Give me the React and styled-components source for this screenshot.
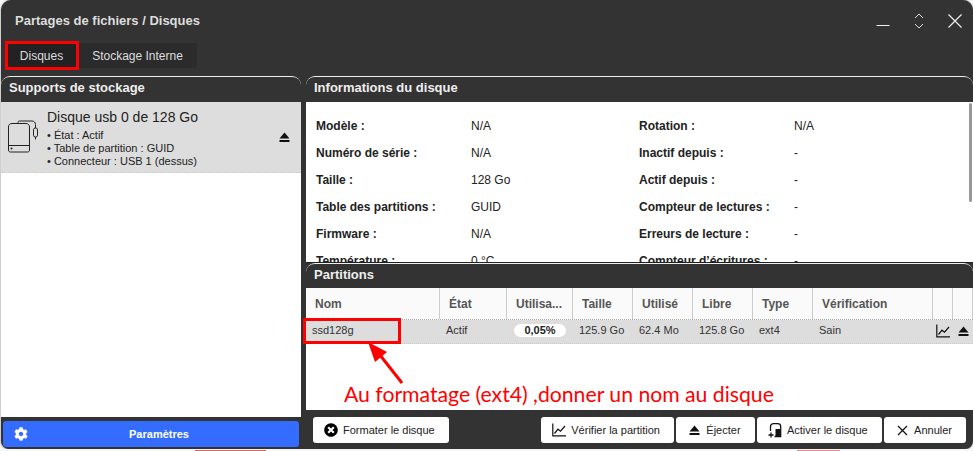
import React from "react";
import styled, { createGlobalStyle } from "styled-components";
import { FaCog, FaTimesCircle } from "react-icons/fa";

const GlobalStyle = createGlobalStyle`
  * {
    box-sizing: border-box;
  }
  html, body {
    margin: 0;
    padding: 0;
    overflow: hidden;
  }
  html {
    background:
      linear-gradient(#c96a5a, #c96a5a) 195px 450px / 71px 1px no-repeat,
      linear-gradient(#e58a8a, #e58a8a) 797px 450px / 43px 1px no-repeat,
      #f6f6f6;
  }
  body {
    font-family: "Liberation Sans", Arial, sans-serif;
  }
`;

const infoRows = [
  ["Modèle :", "N/A", "Rotation :", "N/A"],
  ["Numéro de série :", "N/A", "Inactif depuis :", "-"],
  ["Taille :", "128 Go", "Actif depuis :", "-"],
  ["Table des partitions :", "GUID", "Compteur de lectures :", "-"],
  ["Firmware :", "N/A", "Erreurs de lecture :", "-"],
  ["Température :", "0 °C", "Compteur d’écritures :", "-"],
];

const columns = ["Nom", "État", "Utilisa...", "Taille", "Utilisé", "Libre", "Type", "Vérification", "", ""];

const EjectIcon = ({ size = 11 }) => (
  <svg width={size} height={size} viewBox="0 0 11 11" fill="currentColor">
    <path d="M5.5 0.5 10.5 6.5H0.5Z" />
    <rect x="0.5" y="8" width="10" height="2" />
  </svg>
);

const ChartIcon = () => (
  <svg width="14" height="14" viewBox="0 0 14 14" fill="none" stroke="currentColor" strokeWidth="1.2">
    <path d="M0.8 0.5V12.9H14" />
    <path d="M2.5 10.5 6 6.2 8.5 8.2 13 3" />
  </svg>
);

const DiskIcon = () => (
  <svg width="34" height="34" viewBox="0 0 34 34" fill="none" stroke="#222" strokeWidth="1">
    <path d="M1.5 30V7C1.5 5 2.5 3.5 5 3.5H19C21 3.5 22.5 5 22.5 7V30C22.5 31.5 21.5 32 20.5 32H3.5C2.5 32 1.5 31.5 1.5 30Z" />
    <path d="M1.5 25.5H22.5" />
    <path d="M11 3.5V2.5C11 1.5 11.5 1 12.5 1H25C27 1 28.5 2.5 28.5 4.5V8" />
    <rect x="26.5" y="8" width="4" height="9" rx="1.8" />
    <path d="M28.5 17V19.5" />
    <circle cx="4.5" cy="28.5" r="1" fill="#222" stroke="none" />
  </svg>
);

const ActivateIcon = () => (
  <svg width="14" height="15" viewBox="0 0 14 15" fill="none" stroke="#111" strokeWidth="1.3">
    <path d="M2.5 8V3.5C2.5 1.8 3.8 0.7 5.5 0.7H9.5C11.5 0.7 12.7 1.8 12.7 3.5V13.5H6.5" />
    <rect x="7.5" y="6" width="4.8" height="7" fill="#111" stroke="none" />
    <path d="M0.5 12H5.5M3 9.5V14.5" />
  </svg>
);

const App = () => (
  <>
    <GlobalStyle />
    <Window>
      <TitleBar>
        <Title>Partages de fichiers / Disques</Title>
        <WindowControls>
          <svg width="14" height="14" viewBox="0 0 14 14" stroke="#eee" fill="none">
            <path d="M0.5 11.5H13.5" />
          </svg>
          <svg width="12" height="16" viewBox="0 0 12 16" stroke="#ddd" fill="none">
            <path d="M2 5 6 1 10 5M2 11 6 15 10 11" />
          </svg>
          <svg width="14" height="14" viewBox="0 0 14 14" stroke="#eee" strokeWidth="1.2" fill="none">
            <path d="M0.5 0.5 13.5 13.5M13.5 0.5 0.5 13.5" />
          </svg>
        </WindowControls>
      </TitleBar>

      <Tabs>
        <Tab $active>
          Disques
          <RedBox $inset="-2px -1px -2px -2px" />
        </Tab>
        <Tab>Stockage Interne</Tab>
      </Tabs>

      <Main>
        <LeftColumn>
          <PanelHead>Supports de stockage</PanelHead>
          <DiskList>
            <DiskItem>
              <DiskIcon />
              <DiskText>
                <DiskName>Disque usb 0 de 128 Go</DiskName>
                <DiskLine>• État : Actif</DiskLine>
                <DiskLine>• Table de partition : GUID</DiskLine>
                <DiskLine>• Connecteur : USB 1 (dessus)</DiskLine>
              </DiskText>
              <EjectSlot>
                <EjectIcon />
              </EjectSlot>
            </DiskItem>
          </DiskList>
          <SettingsBar>
            <SettingsButton>
              <FaCog size={14} />
              <span>Paramètres</span>
            </SettingsButton>
          </SettingsBar>
        </LeftColumn>

        <RightColumn>
          <PanelHead>Informations du disque</PanelHead>
          <InfoArea>
            <InfoGrid>
              {infoRows.flat().map((text, i) =>
                i % 2 === 0 ? <InfoLabel key={i}>{text}</InfoLabel> : <InfoValue key={i}>{text}</InfoValue>
              )}
            </InfoGrid>
            <ScrollThumb />
          </InfoArea>

          <PartitionSection>
            <PanelHead $compact>Partitions</PanelHead>
            <TableHead>
              {columns.map((c, i) => (
                <HeadCell key={i}>{c}</HeadCell>
              ))}
            </TableHead>
            <TableBody>
              <TableRow>
                <RowCell>
                  ssd128g
                  <RedBox $inset="-2px 39px -1px -3px" />
                </RowCell>
                <RowCell>Actif</RowCell>
                <RowCell>
                  <Pill>0,05%</Pill>
                </RowCell>
                <RowCell>125.9 Go</RowCell>
                <RowCell>62.4 Mo</RowCell>
                <RowCell>125.8 Go</RowCell>
                <RowCell>ext4</RowCell>
                <RowCell>Sain</RowCell>
                <IconCell>
                  <ChartIcon />
                </IconCell>
                <IconCell>
                  <EjectIcon />
                </IconCell>
              </TableRow>
              <Arrow width="50" height="60" viewBox="0 0 50 60">
                <path d="M41 48 15 15" stroke="#f00" strokeWidth="3" />
                <path d="M7 7 14 27 26 17Z" fill="#f00" />
              </Arrow>
              <Annotation>Au formatage (ext4) ,donner un nom au disque</Annotation>
            </TableBody>
            <Footer>
              <ActionButton>
                <ButtonIcon>
                  <FaTimesCircle size={14} color="#000" />
                </ButtonIcon>
                Formater le disque
              </ActionButton>
              <ButtonGroup>
                <ActionButton>
                  <ButtonIcon>
                    <ChartIcon />
                  </ButtonIcon>
                  Vérifier la partition
                </ActionButton>
                <ActionButton>
                  <ButtonIcon>
                    <EjectIcon />
                  </ButtonIcon>
                  Éjecter
                </ActionButton>
                <ActionButton>
                  <ButtonIcon>
                    <ActivateIcon />
                  </ButtonIcon>
                  Activer le disque
                </ActionButton>
                <ActionButton>
                  <ButtonIcon>
                    <svg width="11" height="11" viewBox="0 0 11 11" stroke="#111" strokeWidth="1.2" fill="none">
                      <path d="M1 1 10 10M10 1 1 10" />
                    </svg>
                  </ButtonIcon>
                  Annuler
                </ActionButton>
              </ButtonGroup>
            </Footer>
          </PartitionSection>
        </RightColumn>
      </Main>
    </Window>
  </>
);

const Window = styled.div`
  width: 972px;
  height: 449px;
  margin-left: 1px;
  display: flex;
  flex-direction: column;
  background: #333;
  border-radius: 10px 10px 8px 8px;
  box-shadow: 0 0 2px rgba(0, 0, 0, 0.6);
  overflow: hidden;
`;

const TitleBar = styled.div`
  height: 41px;
  flex: none;
  display: flex;
  align-items: center;
  justify-content: space-between;
  padding: 0 11px 0 14px;
`;

const Title = styled.div`
  font-size: 13px;
  font-weight: bold;
  color: #ddd;
`;

const WindowControls = styled.div`
  display: flex;
  align-items: center;
  gap: 23px;
`;

const Tabs = styled.div`
  align-self: flex-start;
  display: flex;
  margin: 2px 0 0 6px;
  height: 25px;
  background: #2b2b2b;
  border-radius: 3px;
`;

const Tab = styled.div`
  position: relative;
  display: flex;
  align-items: center;
  justify-content: center;
  font-size: 12px;
  color: #ddd;
  width: ${(p) => (p.$active ? "71px" : "119px")};
  padding-right: ${(p) => (p.$active ? "2px" : "0")};
  background: ${(p) => (p.$active ? "#222" : "transparent")};
  border-radius: 3px;
`;

const RedBox = styled.span`
  position: absolute;
  inset: ${(p) => p.$inset};
  border: 3px solid #f00;
  pointer-events: none;
`;

const Main = styled.div`
  flex: 1;
  min-height: 0;
  display: flex;
  gap: 5px;
  margin-top: 8px;
`;

const LeftColumn = styled.div`
  width: 300px;
  flex: none;
  display: flex;
  flex-direction: column;
`;

const RightColumn = styled.div`
  flex: 1;
  min-width: 0;
  display: flex;
  flex-direction: column;
`;

const PanelHead = styled.div`
  height: ${(p) => (p.$compact ? "25px" : "26px")};
  flex: none;
  padding: 0 8px;
  font-size: 13px;
  font-weight: bold;
  line-height: 22px;
  color: #eee;
  background: #333;
  border-top: 1px solid #eee;
  border-radius: 9px 9px 0 0;
`;

const DiskList = styled.div`
  flex: 1;
  background: #fff;
`;

const DiskItem = styled.div`
  height: 71px;
  display: flex;
  align-items: center;
  gap: 6px;
  padding: 0 11px 0 6px;
  background: #ddd;
  border-bottom: 1px dotted #ccc;
  color: #222;

  > svg {
    flex: none;
  }
`;

const DiskText = styled.div`
  flex: 1;
  align-self: flex-start;
  display: flex;
  flex-direction: column;
  padding-top: 7px;
`;

const DiskName = styled.div`
  font-size: 14px;
  line-height: 17px;
  margin-bottom: 3px;
`;

const DiskLine = styled.div`
  font-size: 11px;
  line-height: 13px;
`;

const EjectSlot = styled.div`
  display: flex;
  color: #111;
`;

const SettingsBar = styled.div`
  flex: none;
  padding: 4px 2px 2px;
`;

const SettingsButton = styled.div`
  position: relative;
  height: 26px;
  display: flex;
  align-items: center;
  justify-content: center;
  padding-left: 16px;
  background: #336cff;
  border-radius: 3px;
  color: #fff;
  font-size: 11px;
  font-weight: bold;

  svg {
    position: absolute;
    left: 11px;
  }
`;

const InfoArea = styled.div`
  position: relative;
  height: 160px;
  flex: none;
  background: #fff;
  overflow: hidden;
`;

const InfoGrid = styled.div`
  display: grid;
  grid-template-columns: 155px 168px 155px 1fr;
  grid-auto-rows: 27px;
  align-items: center;
  padding: 10px 0 0 10px;
  font-size: 12px;
  color: #222;
`;

const InfoLabel = styled.div`
  font-weight: bold;
`;

const InfoValue = styled.div``;

const ScrollThumb = styled.div`
  position: absolute;
  top: 1px;
  right: 1px;
  width: 3px;
  height: 99px;
  background: #999;
  border-radius: 2px;
`;

const PartitionSection = styled.div`
  flex: 1;
  min-height: 0;
  display: flex;
  flex-direction: column;
  border-top: 1px solid #222;
`;

const gridColumns = "134px 67px 66px 60px 60px 60px 60px 120px 20px 1fr";

const TableHead = styled.div`
  height: 32px;
  flex: none;
  display: grid;
  grid-template-columns: ${gridColumns};
  background: #fafafa;
  border-bottom: 1px dotted #aaa;
`;

const HeadCell = styled.div`
  display: flex;
  align-items: center;
  padding-left: 9px;
  font-size: 12px;
  font-weight: bold;
  color: #555;
  border-right: 1px solid #ccc;
`;

const TableBody = styled.div`
  position: relative;
  flex: 1;
  background: #fff;
`;

const TableRow = styled.div`
  height: 24px;
  display: grid;
  grid-template-columns: ${gridColumns};
  background: #ddd;
  border-bottom: 1px dotted #ccc;
`;

const RowCell = styled.div`
  position: relative;
  display: flex;
  align-items: center;
  padding: 0 0 3px 6px;
  font-size: 11px;
  color: #333;
`;

const IconCell = styled.div`
  display: flex;
  align-items: center;
  justify-content: center;
  padding-bottom: 1px;
  color: #111;
`;

const Pill = styled.span`
  width: 52px;
  height: 13px;
  margin-left: 1px;
  display: flex;
  align-items: center;
  justify-content: center;
  background: #fff;
  border-radius: 7px;
  font-weight: bold;
  color: #222;
`;

const Arrow = styled.svg`
  position: absolute;
  left: 55px;
  top: 15px;
`;

const Annotation = styled.div`
  position: absolute;
  left: 38px;
  top: 60px;
  font-family: Lato, sans-serif;
  font-size: 21.2px;
  line-height: 28px;
  color: #f00;
  white-space: nowrap;
`;

const Footer = styled.div`
  height: 39px;
  flex: none;
  display: flex;
  align-items: flex-start;
  justify-content: space-between;
  padding: 7px 7px 0 7px;
`;

const ButtonGroup = styled.div`
  display: flex;
  gap: 2.4px;
`;

const ActionButton = styled.div`
  height: 26px;
  display: flex;
  align-items: center;
  gap: 5px;
  padding: 0 14px 0 11px;
  background: #fff;
  border-radius: 3px;
  font-size: 11px;
  color: #222;
`;

const ButtonIcon = styled.span`
  width: 14px;
  display: flex;
  align-items: center;
  justify-content: center;
  color: #111;
`;

export default App;
